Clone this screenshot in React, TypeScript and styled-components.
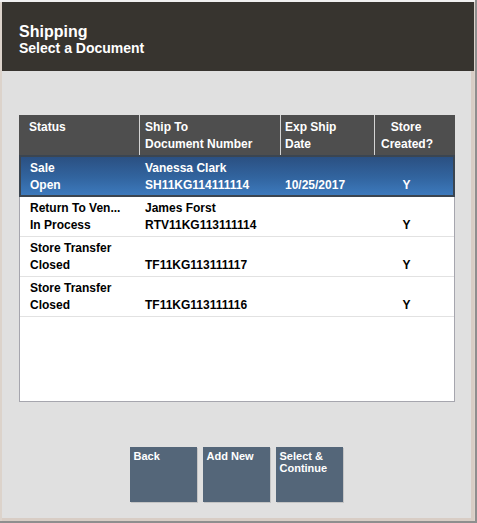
import React from "react";
import styled, { createGlobalStyle } from "styled-components";

const GlobalStyle = createGlobalStyle`
  html, body {
    margin: 0;
    padding: 0;
    background: #ffffff;
  }
  * {
    box-sizing: border-box;
  }
`;

const Frame = styled.div`
  width: 477px;
  height: 523px;
  display: flex;
  flex-direction: column;
  padding: 2px 1px 0 2px;
  background: #dcd3cb;
  border-right: 2px solid #8e8e8e;
  border-bottom: 2px solid #8e8e8e;
  box-shadow: inset 0 2px 0 #f0f0f0;
  font-family: "Liberation Sans", Arial, Helvetica, sans-serif;
`;

const Header = styled.div`
  height: 69px;
  background: #37342f;
  color: #ffffff;
  padding: 21px 0 0 17px;
`;

const Title = styled.div`
  font-size: 16px;
  font-weight: bold;
  line-height: 17px;
`;

const Subtitle = styled.div`
  font-size: 14px;
  font-weight: bold;
  line-height: 16px;
`;

const Body = styled.div`
  flex: 1;
  background: #e0e0e0;
  padding: 44px 0 0 17px;
  box-shadow: inset -3px 0 0 #d8cdc5, inset 0 -3px 0 #d8cdc5;
  display: flex;
  flex-direction: column;
`;

const Table = styled.div`
  width: 436px;
`;

const cols = "120px 141px 94px 81px";

const HeadRow = styled.div`
  display: grid;
  grid-template-columns: ${cols};
  height: 40px;
  background: #4e4e4e;
  color: #ffffff;
`;

const HeadCell = styled.div<{ $first?: boolean; $center?: boolean; $pad: number }>`
  border-left: ${(p) => (p.$first ? "none" : "1px solid #d4d4d4")};
  padding: 4px 0 0 ${(p) => p.$pad}px;
  padding-right: ${(p) => (p.$center ? "24px" : "0")};
  text-align: ${(p) => (p.$center ? "center" : "left")};
  font-size: 12px;
  font-weight: bold;
  line-height: 17px;
`;

const List = styled.div`
  height: 247px;
  background: #ffffff;
  border: 1px solid #a6a6ae;
  border-top: 0;
`;

const Row = styled.div<{ $selected?: boolean }>`
  display: grid;
  grid-template-columns: ${cols};
  color: ${(p) => (p.$selected ? "#ffffff" : "#000000")};
  background: ${(p) =>
    p.$selected
      ? "linear-gradient(to bottom, #2a4e7f 0%, #3265a0 55%, #3e7cc0 100%)"
      : "#ffffff"};
  box-shadow: ${(p) => (p.$selected ? "inset 0 0 0 2px #3b4550" : "none")};
  border-bottom: ${(p) => (p.$selected ? "0" : "1px solid #e2e2e2")};
  margin: ${(p) => (p.$selected ? "0 -1px" : "0")};
  padding: ${(p) => (p.$selected ? "5px 1px 0" : "3px 0 0")};
  height: ${(p) => (p.$selected ? "42px" : "40px")};
`;

const Cell = styled.div<{ $pad: number; $center?: boolean }>`
  padding-left: ${(p) => p.$pad}px;
  padding-right: ${(p) => (p.$center ? "24px" : "0")};
  text-align: ${(p) => (p.$center ? "center" : "left")};
  font-size: 12px;
  font-weight: bold;
  line-height: 17px;
  white-space: nowrap;
  overflow: hidden;
`;

const ButtonBar = styled.div`
  display: flex;
  justify-content: center;
  gap: 6px;
  margin-top: 45px;
  margin-left: -21px;
`;

const Button = styled.button`
  width: 67px;
  height: 55px;
  background: #546679;
  border: 0;
  box-shadow: 1px 1px 0 #c4c4c4;
  color: #ffffff;
  font-family: "Liberation Sans", Arial, Helvetica, sans-serif;
  font-size: 11px;
  font-weight: bold;
  line-height: 12px;
  text-align: left;
  padding: 3px 4px 0 4px;
  display: flex;
  align-items: flex-start;
`;

interface Doc {
  type: string;
  status: string;
  shipTo: string;
  number: string;
  date: string;
  store: string;
}

const docs: Doc[] = [
  {
    type: "Sale",
    status: "Open",
    shipTo: "Vanessa Clark",
    number: "SH11KG114111114",
    date: "10/25/2017",
    store: "Y",
  },
  {
    type: "Return To Ven...",
    status: "In Process",
    shipTo: "James Forst",
    number: "RTV11KG113111114",
    date: "",
    store: "Y",
  },
  {
    type: "Store Transfer",
    status: "Closed",
    shipTo: "",
    number: "TF11KG113111117",
    date: "",
    store: "Y",
  },
  {
    type: "Store Transfer",
    status: "Closed",
    shipTo: "",
    number: "TF11KG113111116",
    date: "",
    store: "Y",
  },
];

const App: React.FC = () => {
  return (
    <>
      <GlobalStyle />
      <Frame>
        <Header>
          <Title>Shipping</Title>
          <Subtitle>Select a Document</Subtitle>
        </Header>
        <Body>
          <Table>
            <HeadRow>
              <HeadCell $first $pad={10}>Status</HeadCell>
              <HeadCell $pad={5}>
                Ship To
                <br />
                Document Number
              </HeadCell>
              <HeadCell $pad={4}>
                Exp Ship
                <br />
                Date
              </HeadCell>
              <HeadCell $center $pad={6}>
                Store
                <br />
                Created?
              </HeadCell>
            </HeadRow>
            <List>
              {docs.map((d, i) => (
                <Row key={d.number} $selected={i === 0}>
                  <Cell $pad={10}>
                    {d.type}
                    <br />
                    {d.status}
                  </Cell>
                  <Cell $pad={5}>
                    {d.shipTo || "\u00a0"}
                    <br />
                    {d.number}
                  </Cell>
                  <Cell $pad={4}>
                    {"\u00a0"}
                    <br />
                    {d.date || "\u00a0"}
                  </Cell>
                  <Cell $pad={6} $center>
                    {"\u00a0"}
                    <br />
                    {d.store}
                  </Cell>
                </Row>
              ))}
            </List>
          </Table>
          <ButtonBar>
            <Button>Back</Button>
            <Button>Add New</Button>
            <Button>
              Select &amp;
              <br />
              Continue
            </Button>
          </ButtonBar>
        </Body>
      </Frame>
    </>
  );
};

export default App;
